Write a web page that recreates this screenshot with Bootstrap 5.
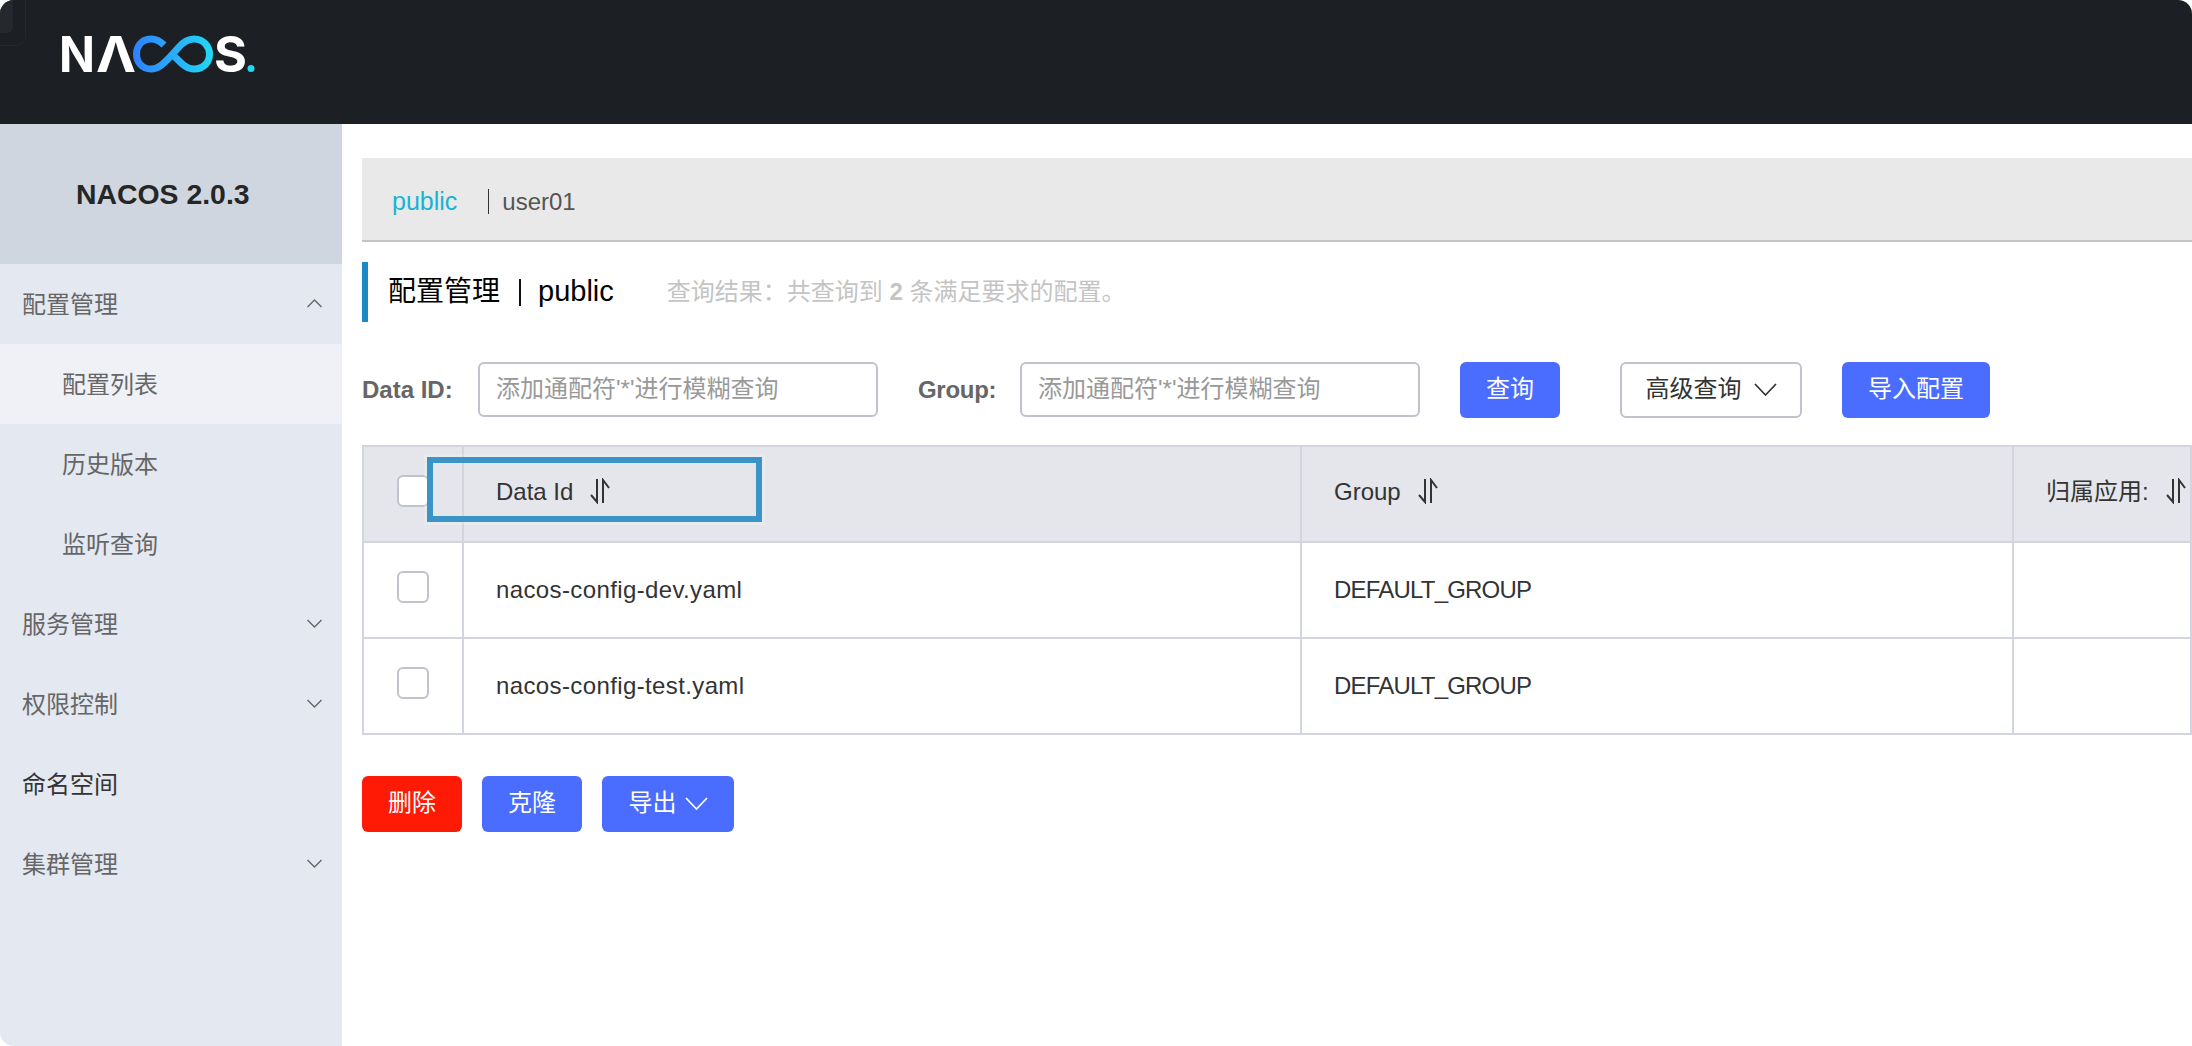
<!DOCTYPE html>
<html lang="zh-CN">
<head>
<meta charset="utf-8">
<title>Nacos</title>
<link rel="stylesheet" href="https://cdn.jsdelivr.net/npm/bootstrap@5.3.0/dist/css/bootstrap.min.css">
<style>
html,body{height:100%;margin:0;background:#fff;overflow:hidden}
body{font-family:"Liberation Sans","Noto Sans CJK SC",sans-serif;font-size:24px;color:#333}
.app-shell{height:1046px;width:2192px;border-radius:14px;overflow:hidden;position:relative}
.top-bar{height:124px;background:#1c1f24;padding:0 0 0 52px;align-items:center}
.top-ghost{position:absolute;left:-30px;top:-30px;width:56px;height:76px;border:1px solid #25282d;border-radius:10px}
.top-ghost::after{content:"";position:absolute;left:12px;top:12px;right:12px;bottom:12px;background:#25282c;border-radius:6px}
.brand-svg{display:block;margin-top:0}
.brand-txt{font-family:"Inter","Liberation Sans",sans-serif;font-weight:700;fill:#fff}
.side-col{width:342px;flex:none;background:#e4e8f1}
.side-head{height:140px;background:#cfd6df;padding-left:76px;font-size:28.4px;font-weight:700;color:#262626}
.side-list{--bs-list-group-bg:transparent;--bs-list-group-border-width:0;border-radius:0}
.side-item{height:80px;padding:2px 20px 0 22px;background:transparent;color:#666;font-size:24px}
.side-item.sub-item{padding-left:62px}
.side-item.active-sub{background:#eff1f6;color:#666}
.side-item.dark-item{color:#333}
.side-chev{width:15px;height:9px;fill:none;stroke:#666;stroke-width:1.4;margin-top:-3px}
.main-col{padding:34px 0 0 20px;overflow:hidden;min-width:0}
.tab-strip{height:84px;background:#e9e9e9;border-bottom:2px solid #c4c4c4;padding:5px 0 0 30px}
.tab-pub{color:#17b4d6;font-size:25px}
.tab-sep{width:1px;height:25px;background:#333;margin:0 13px 0 31px}
.tab-usr{color:#555;font-size:24px}
.title-row{height:60px;margin-top:20px;border-left:6px solid #1a8ac7;padding-left:20px}
.title-main{color:#000;font-size:28px}
.title-sep{width:2px;height:27px;background:#111;margin:0 17px 0 19px}
.title-pub{color:#000;font-size:29px}
.title-note{color:#c4c4c4;font-size:24px;margin-left:53px}
.search-row{margin-top:40px;height:56px}
.field-lbl{font-weight:700;color:#666;font-size:24px;margin:0;width:116px}
.field-lbl.grp-lbl{width:102px;margin-left:40px;letter-spacing:-.3px}
.field-input.form-control{width:400px;height:55px;align-self:flex-start;border:2px solid #c0c3ce;border-radius:6px;padding:0 16px 2px;font-size:24px;box-shadow:none}
.field-input::placeholder{color:#999;opacity:1}
.act-btn.btn{height:56px;font-size:24px;border-radius:6px;padding:0 0 2px;border:0;color:#fff;display:inline-flex;align-items:center;justify-content:center;gap:8px}
.btn-blue{background:#4a6cff}
.btn-red{background:#ff1a05}
.wd-100{width:100px}
.wd-148{width:148px}
.wd-132{width:132px}
.act-btn.btn-plain{width:182px;background:#fff;border:2px solid #c0c3ce;color:#333;gap:12px}
.ms-40{margin-left:40px}
.ms-60{margin-left:60px}
.btn-chev{fill:none;stroke:currentColor;stroke-width:1.7}
.grid-wrap{margin-top:27px;position:relative;width:2000px;overflow:visible}
.cfg-table.table{table-layout:fixed;width:1830px;margin:0;border:2px solid #d3d5de;border-collapse:collapse;--bs-table-bg:transparent}
.cfg-table th,.cfg-table td{height:96px;padding:0 0 1px 32px;border:2px solid #d3d5de;vertical-align:middle;font-weight:400;font-size:24px;color:#333}
.cfg-table thead th{background:#e4e6eb;padding-bottom:4px}
.cfg-table th.chk-col,.cfg-table td.chk-col{padding:0 0 6px 33px}
.chk-box{display:block;width:32px;height:32px;background:#fff;border:2px solid #c0c3ce;border-radius:6px}
.cell-name{letter-spacing:.38px}
.cell-grp{letter-spacing:-.8px}
.sort-ico{fill:none;stroke:#333;stroke-width:2;margin-left:16px;vertical-align:-4px}
.focus-box{position:absolute;left:65px;top:12px;width:335px;height:65px;border:6px solid #3b94c6;box-shadow:0 0 0 3px rgba(255,255,255,.18);pointer-events:none}
.bottom-row{margin-top:41px}
</style>
</head>
<body>
<div class="app-shell d-flex flex-column">
  <header class="top-bar d-flex flex-shrink-0">
    <div class="top-ghost"></div>
    <svg class="brand-svg" width="210" height="124" viewBox="52 0 210 124" role="img" aria-label="NACOS.">
      <defs>
        <linearGradient id="inf" x1="133" x2="213" y1="0" y2="0" gradientUnits="userSpaceOnUse">
          <stop offset="0" stop-color="#2f80ff"/><stop offset="1" stop-color="#22d8f6"/>
        </linearGradient>
      </defs>
      <text class="brand-txt" x="59" y="72" font-size="50" textLength="36" lengthAdjust="spacingAndGlyphs">N</text>
      <text class="brand-txt" x="96" y="72" font-size="50" textLength="40" lengthAdjust="spacingAndGlyphs">Λ</text>
      <path d="M164 45C160 41 156 39 151 39C141 39 136.500 47 136.500 54C136.500 62 142 69 151 69C158 69 163 64 168 59L178 48C183 42 188 39 194 39C204 39 209.500 47 209.500 54C209.500 62 204 69 194 69C187 69 182 64 177 59L170 52" fill="none" stroke="url(#inf)" stroke-width="7"/>
      <text class="brand-txt" x="214" y="72" font-size="50" textLength="33" lengthAdjust="spacingAndGlyphs">S</text>
      <circle cx="251" cy="68.500" r="3.500" fill="#22d8f6"/>
    </svg>
  </header>
  <div class="d-flex flex-grow-1" style="min-height:0">
    <aside class="side-col d-flex flex-column">
      <div class="side-head d-flex align-items-center">NACOS 2.0.3</div>
      <div class="list-group side-list">
        <a class="list-group-item side-item d-flex align-items-center justify-content-between">配置管理<svg class="side-chev" viewBox="0 0 15 9"><path d="M.5 8 7.500 1l7 7"/></svg></a>
        <a class="list-group-item side-item sub-item active-sub d-flex align-items-center">配置列表</a>
        <a class="list-group-item side-item sub-item d-flex align-items-center">历史版本</a>
        <a class="list-group-item side-item sub-item d-flex align-items-center">监听查询</a>
        <a class="list-group-item side-item d-flex align-items-center justify-content-between">服务管理<svg class="side-chev" viewBox="0 0 15 9"><path d="M.5 1l7 7 7-7"/></svg></a>
        <a class="list-group-item side-item d-flex align-items-center justify-content-between">权限控制<svg class="side-chev" viewBox="0 0 15 9"><path d="M.5 1l7 7 7-7"/></svg></a>
        <a class="list-group-item side-item dark-item d-flex align-items-center">命名空间</a>
        <a class="list-group-item side-item d-flex align-items-center justify-content-between">集群管理<svg class="side-chev" viewBox="0 0 15 9"><path d="M.5 1l7 7 7-7"/></svg></a>
      </div>
    </aside>
    <main class="main-col flex-grow-1">
      <div class="tab-strip d-flex align-items-center">
        <span class="tab-pub">public</span><span class="tab-sep"></span><span class="tab-usr">user01</span>
      </div>
      <div class="title-row d-flex align-items-center">
        <span class="title-main">配置管理</span><span class="title-sep"></span><span class="title-pub">public</span>
        <span class="title-note">查询结果：共查询到 <b>2</b> 条满足要求的配置。</span>
      </div>
      <form class="search-row d-flex align-items-center">
        <label class="field-lbl">Data ID:</label>
        <input class="form-control field-input" placeholder="添加通配符'*'进行模糊查询">
        <label class="field-lbl grp-lbl">Group:</label>
        <input class="form-control field-input" placeholder="添加通配符'*'进行模糊查询">
        <button type="button" class="btn act-btn btn-blue wd-100 ms-40">查询</button>
        <button type="button" class="btn act-btn btn-plain ms-60">高级查询<svg class="btn-chev" width="23" height="13" viewBox="0 0 23 13"><path d="M1 1l10.500 11L22 1"/></svg></button>
        <button type="button" class="btn act-btn btn-blue wd-148 ms-40">导入配置</button>
      </form>
      <div class="grid-wrap">
        <table class="table cfg-table">
          <colgroup><col style="width:100px"><col style="width:838px"><col style="width:712px"><col></colgroup>
          <thead>
            <tr>
              <th class="chk-col"><span class="chk-box"></span></th>
              <th>Data Id<svg class="sort-ico" width="22" height="26" viewBox="0 0 22 26"><path d="M8 1v23L2 17M14 25V2l6 8"/></svg></th>
              <th>Group<svg class="sort-ico" width="22" height="26" viewBox="0 0 22 26"><path d="M8 1v23L2 17M14 25V2l6 8"/></svg></th>
              <th>归属应用:<svg class="sort-ico" width="22" height="26" viewBox="0 0 22 26"><path d="M8 1v23L2 17M14 25V2l6 8"/></svg></th>
            </tr>
          </thead>
          <tbody>
            <tr><td class="chk-col"><span class="chk-box"></span></td><td class="cell-name">nacos-config-dev.yaml</td><td class="cell-grp">DEFAULT_GROUP</td><td></td></tr>
            <tr><td class="chk-col"><span class="chk-box"></span></td><td class="cell-name">nacos-config-test.yaml</td><td class="cell-grp">DEFAULT_GROUP</td><td></td></tr>
          </tbody>
        </table>
        <div class="focus-box"></div>
      </div>
      <div class="bottom-row d-flex gap-3">
        <button type="button" class="btn act-btn btn-red wd-100">删除</button>
        <button type="button" class="btn act-btn btn-blue wd-100 ms-1">克隆</button>
        <button type="button" class="btn act-btn btn-blue wd-132 ms-1">导出<svg class="btn-chev" width="23" height="13" viewBox="0 0 23 13"><path d="M1 1l10.500 11L22 1"/></svg></button>
      </div>
    </main>
  </div>
</div>
<script src="https://cdn.jsdelivr.net/npm/bootstrap@5.3.0/dist/js/bootstrap.bundle.min.js"></script>
</body>
</html>
